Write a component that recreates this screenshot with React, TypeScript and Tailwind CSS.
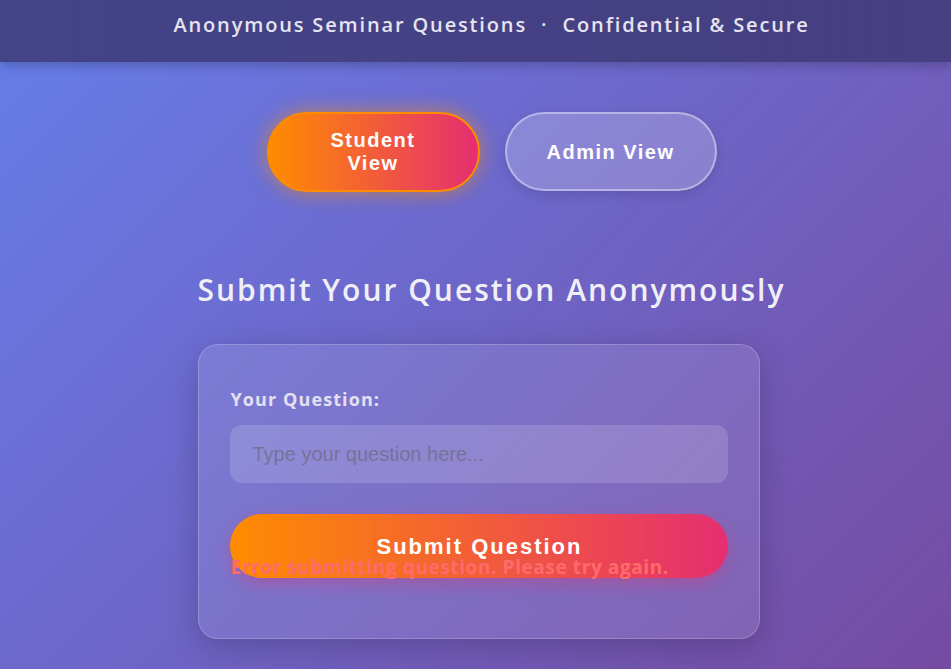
import React from "react";

export default function App() {
  const poppins = { fontFamily: '"Open Sans", "Noto Sans", sans-serif' };
  const arial = { fontFamily: '"Liberation Sans", Arial, sans-serif' };
  return (
    <div
      className="min-h-[669px] w-full bg-[linear-gradient(135deg,#667eea_0%,#764ba2_100%)] flex flex-col items-center"
      style={poppins}
    >
      <header className="w-full h-[62px] bg-[linear-gradient(90deg,#434388,#463f80)] shadow-[0_4px_10px_rgba(0,0,0,0.2)] flex items-start justify-center pt-[10px] pl-[32px]">
        <p className="text-[20px] font-semibold tracking-[1.85px] text-[#e6e4f0]">
          Anonymous Seminar Questions&nbsp; ·&nbsp; Confidential &amp; Secure
        </p>
      </header>

      <div className="w-full pl-[32px] flex flex-col items-center">
        <div className="flex gap-[25px] mt-[50px]" style={arial}>
          <button className="w-[213px] h-[80px] rounded-full border-2 border-[#ff8c00] bg-[linear-gradient(90deg,#ff8c00,#e52e71)] text-white font-bold text-[20px] tracking-[1.5px] leading-[23px] px-[50px] shadow-[0_0_20px_rgba(255,140,0,0.6)]">
            Student View
          </button>
          <button className="w-[212px] h-[79px] rounded-full border-2 border-white/40 bg-white/20 text-white font-bold text-[20px] tracking-[1.5px] shadow-[0_4px_12px_rgba(0,0,0,0.12)]">
            Admin View
          </button>
        </div>

        <div className="flex flex-col items-start">
          <h1 className="mt-[78px] text-[30px] font-semibold tracking-[2px] text-[#f0eef6] leading-[40px]">
            Submit Your Question Anonymously
          </h1>

          <div className="mt-[34px] ml-[1px] w-[562px] h-[295px] rounded-[20px] border border-white/20 bg-white/10 shadow-[0_8px_32px_rgba(0,0,0,0.2)] px-[31px] pt-[40px]">
            <label className="block text-[18px] font-bold tracking-[1.1px] text-[#e4e0f2] leading-[28px]">
              Your Question:
            </label>
            <input
              placeholder="Type your question here..."
              className="mt-[12px] w-[498px] h-[58px] rounded-[12px] bg-white/15 px-[22px] text-[20px] outline-none placeholder:text-[#77729a]"
              style={arial}
            />
            <button
              className="mt-[31px] w-[498px] h-[64px] rounded-full bg-[linear-gradient(90deg,#ff8c00,#e52e71)] text-white font-bold text-[22px] tracking-[2px] shadow-[0_6px_16px_rgba(229,46,113,0.35)]"
              style={arial}
            >
              Submit Question
            </button>
            <p className="relative -mt-[24px] text-[19px] font-bold tracking-[0.6px] text-[#ff6b6b] leading-[26px]">
              Error submitting question. Please try again.
            </p>
          </div>
        </div>
      </div>
    </div>
  );
}
